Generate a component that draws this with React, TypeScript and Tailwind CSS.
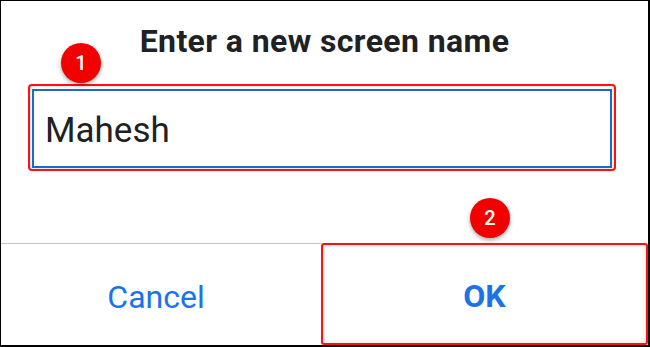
import React from "react";

function Badge({ n, className }: { n: string; className: string }) {
  return (
    <div
      className={
        "absolute flex h-[40px] w-[40px] items-center justify-center rounded-full bg-[#f20000] text-[20px] font-medium leading-none text-white shadow-[0_2px_4px_rgba(0,0,0,0.35)] " +
        className
      }
      style={{ fontFamily: "Roboto, 'Liberation Sans', sans-serif" }}
    >
      {n}
    </div>
  );
}

export default function App() {
  return (
    <div
      className="relative flex h-[347px] w-[650px] flex-col overflow-hidden border-b-2 border-l border-r-2 border-t border-black bg-white"
      style={{ fontFamily: "Roboto, 'Liberation Sans', sans-serif" }}
    >
      <div className="flex h-[242px] flex-col">
        <h1 className="pt-[22px] text-center text-[32px] font-bold leading-[36px] tracking-[0.4px] text-[#202124]">
          Enter a new screen name
        </h1>
        <div className="ml-[27px] mt-[25px] h-[87px] w-[588px] rounded-[4px] border-2 border-[#ff1010] px-[2px] pb-[1px] pt-[3px] shadow-[inset_0_0_4px_rgba(0,0,0,0.18)]">
          <div className="flex h-full items-center border-2 border-[#1c6cc6] bg-white pl-[11px] pt-[3px]">
            <span className="text-[35px] leading-none text-[#202124]">Mahesh</span>
          </div>
        </div>
      </div>
      <div className="flex flex-1">
        <div className="flex w-[320px] items-center justify-center border-t border-[#c4c4c4] pr-[10px] pt-[4px]">
          <span className="text-[32px] leading-none text-[#1a73e8]">Cancel</span>
        </div>
        <div className="flex flex-1 items-center justify-center rounded-[3px] border-2 border-[#ff1010] pt-[4px] shadow-[inset_0_0_5px_rgba(0,0,0,0.15)]">
          <span className="text-[32px] font-bold leading-none text-[#1a73e8]">OK</span>
        </div>
      </div>
      <Badge n="1" className="left-[60px] top-[42px]" />
      <Badge n="2" className="left-[469px] top-[197px]" />
    </div>
  );
}
